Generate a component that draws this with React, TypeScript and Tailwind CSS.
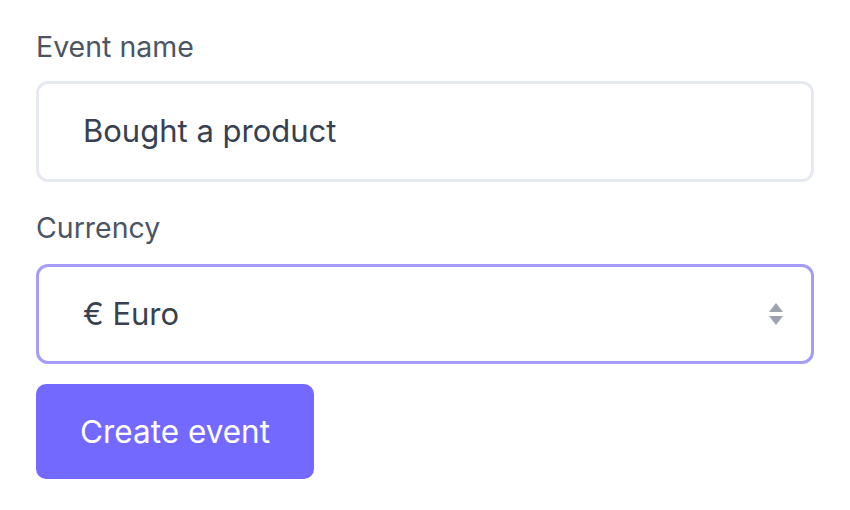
import React from "react";

export default function App() {
  return (
    <div className="min-h-[510px] w-[850px] bg-white px-[36px] pt-[29px] font-['Inter',sans-serif]">
      <div className="flex flex-col">
        <label className="text-[28.5px] leading-[36px] text-[#4b5563]">Event name</label>
        <div className="mt-[16px] flex h-[101px] items-center rounded-[12px] border-[3px] border-[#e6e9ef] pl-[44px] text-[31px] text-[#374151]">
          Bought a product
        </div>
        <label className="mt-[28px] text-[28.5px] leading-[36px] text-[#4b5563]">Currency</label>
        <div className="mt-[18px] flex h-[100px] items-center justify-between rounded-[12px] border-[3px] border-[#a59cf9] pl-[44px] pr-[26px] text-[31px] text-[#374151]">
          <span>€ Euro</span>
          <svg width="18" height="24" viewBox="0 0 18 24" className="text-[#9ca3af]">
            <path d="M9 1 L16 10 L2 10 Z" fill="currentColor" />
            <path d="M9 23 L16 14 L2 14 Z" fill="currentColor" />
          </svg>
        </div>
        <button className="mt-[20px] flex h-[95px] w-[278px] items-center justify-center rounded-[10px] bg-[#7469ff] text-[31.5px] text-white">
          Create event
        </button>
      </div>
    </div>
  );
}
